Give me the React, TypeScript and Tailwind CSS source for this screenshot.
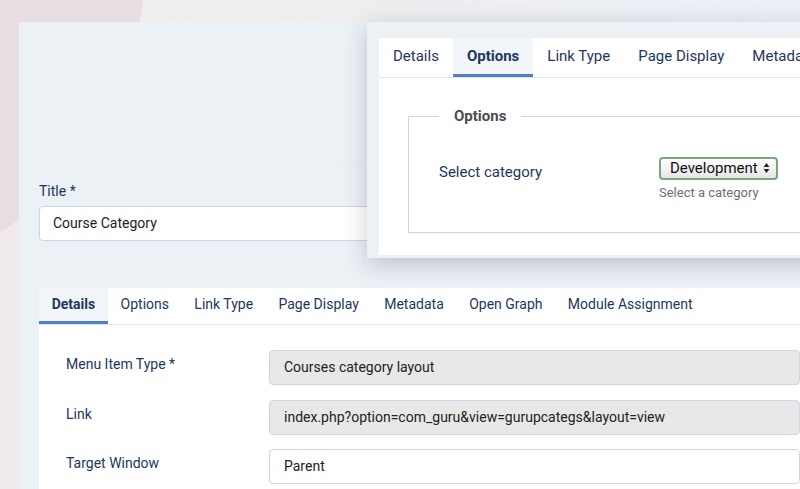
import React from 'react';

const navy = 'text-[#1d3761]';

function Tabs({ items, active, size }: { items: string[]; active: number; size: 'sm' | 'lg' }) {
  const lg = size === 'lg';
  return (
    <div className={`flex shrink-0 border-b border-[#dfe6ef] ${lg ? 'h-[40px]' : 'h-[37px]'}`}>
      {items.map((t, i) => (
        <div
          key={t}
          className={`flex items-center whitespace-nowrap border-b-[3px] ${lg ? 'px-[14px] text-[15px]' : 'px-[12.7px] text-[14px]'} ${
            i === active ? 'bg-[#f2f5f9] border-[#4f7fc6] font-bold' : 'border-transparent'
          } ${navy}`}
        >
          {t}
        </div>
      ))}
    </div>
  );
}

function Row({ label, value, readOnly }: { label: string; value: string; readOnly?: boolean }) {
  return (
    <div className="flex items-start h-[49.5px] shrink-0">
      <div className={`w-[230px] shrink-0 pl-[27px] pt-[4px] text-[14px] ${navy}`}>{label}</div>
      <div
        className={`flex-1 h-[35px] flex items-center pl-[14px] rounded-[4px] border border-[#cad7e9] text-[14px] text-[#222] whitespace-nowrap ${
          readOnly ? 'bg-[#e8e8e8]' : 'bg-white'
        }`}
      >
        {value}
      </div>
    </div>
  );
}

export default function App() {
  return (
    <div
      className="relative w-[800px] h-[489px] overflow-hidden bg-gradient-to-r from-[#f1eceb] via-[#eeeef0] to-[#ebf0f8]"
      style={{ fontFamily: 'Roboto, "Liberation Sans", sans-serif' }}
    >
      {/* decorative blob */}
      <div className="absolute left-[-547px] top-[-397px] w-[694px] h-[694px] rounded-full bg-[#e7dde2]" />

      {/* main panel */}
      <div className="relative ml-[19px] mt-[22px] h-[467px] overflow-hidden bg-[#ecf1f6] pl-[20px] flex flex-col">
        <div className="h-[144px] shrink-0 border-b border-[#e9eef4] -ml-[20px]" />
        <div className={`shrink-0 mt-[15px] text-[14px] ${navy}`}>Title *</div>
        <div className="shrink-0 mt-[4px] w-[520px] h-[35px] flex items-center pl-[13px] bg-white rounded-[4px] border border-[#c9d6e8] text-[14px] text-[#222]">
          Course Category
        </div>

        <div className="mt-[47px] shrink-0 h-[300px] bg-white flex flex-col">
          <Tabs
            size="sm"
            active={0}
            items={['Details', 'Options', 'Link Type', 'Page Display', 'Metadata', 'Open Graph', 'Module Assignment']}
          />
          <div className="pt-[25px] flex flex-col">
            <Row label="Menu Item Type *" value="Courses category layout" readOnly />
            <Row label="Link" value="index.php?option=com_guru&view=gurupcategs&layout=view" readOnly />
            <Row label="Target Window" value="Parent" />
          </div>
        </div>
      </div>

      {/* zoomed overlay */}
      <div className="absolute left-[367px] top-[22px] w-[460px] h-[236px] bg-[#edf1f6] pl-[12px] pt-[16px] pb-[3px] shadow-[0_6px_22px_rgba(60,70,90,0.28)]">
        <div className="h-full bg-white flex flex-col overflow-hidden">
          <Tabs size="lg" active={1} items={['Details', 'Options', 'Link Type', 'Page Display', 'Metadata']} />
          <div className="pl-[29px] pt-[27px]">
            <fieldset className="border border-[#c7d5e8] h-[128px] pl-[30px] pr-0 mr-[-20px]">
              <legend className="px-[15px] text-[15px] font-bold text-[#4a4d53]">Options</legend>
              <div className="flex items-start pt-[29px]">
                <div className={`w-[220px] pt-[4px] text-[15px] ${navy}`}>Select category</div>
                <div className="flex flex-col">
                  <div className="w-[119px] h-[23px] flex items-center justify-between pl-[9px] pr-[6px] rounded-[4px] border-2 border-[#7ba57c] bg-gradient-to-b from-white to-[#e6e6e6] text-[15px] text-[#111]">
                    <span>Development</span>
                    <svg width="7" height="12" viewBox="0 0 7 12">
                      <path d="M3.5 1 L6.5 5 H0.5 Z M3.5 11 L6.5 7 H0.5 Z" fill="#222" />
                    </svg>
                  </div>
                  <div className="mt-[3px] text-[13px] text-[#6b7078]">Select a category</div>
                </div>
              </div>
            </fieldset>
          </div>
        </div>
      </div>
    </div>
  );
}
